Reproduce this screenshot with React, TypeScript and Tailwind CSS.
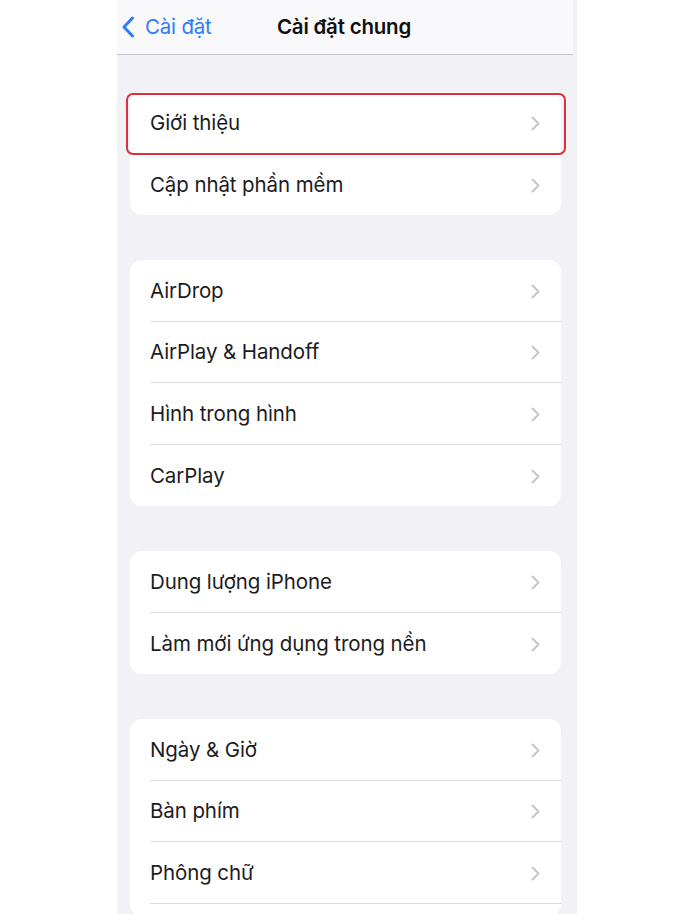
import React from 'react';

const groups: string[][] = [
  ['Giới thiệu', 'Cập nhật phần mềm'],
  ['AirDrop', 'AirPlay & Handoff', 'Hình trong hình', 'CarPlay'],
  ['Dung lượng iPhone', 'Làm mới ứng dụng trong nền'],
  ['Ngày & Giờ', 'Bàn phím', 'Phông chữ'],
];

const Chevron = () => (
  <svg width="9" height="15" viewBox="0 0 9 15" fill="none" className="shrink-0">
    <path d="M1.5 1.5l6 6-6 6" stroke="#c4c4c7" strokeWidth="1.8" strokeLinecap="round" strokeLinejoin="round" />
  </svg>
);

const Row = ({ label, last, highlight }: { label: string; last: boolean; highlight?: boolean }) => (
  <div className="relative h-[61.5px] pl-5">
    <div className={`h-full flex items-center justify-between pr-[21px] pt-[2px] ${last || highlight ? '' : 'border-b border-[#dcdce0]'}`}>
      <span className="text-[20.5px] text-[#1c1c1e] tracking-[-0.1px]">{label}</span>
      <Chevron />
    </div>
    {highlight && (
      <div className="absolute -left-[4px] -right-[5px] top-[1px] bottom-[-1px] border-2 border-[#d8323c] rounded-[7px]" />
    )}
  </div>
);

export default function App() {
  return (
    <div className="w-[700px] h-[921px] bg-white flex justify-center overflow-hidden" style={{ fontFamily: 'Inter, "Noto Sans", sans-serif' }}>
      <div className="w-[460px] ml-[-6px] h-[914px] bg-[#f1f1f6] flex flex-col overflow-hidden">
        <div className="h-[55px] shrink-0 bg-[#f9f9fb] border-b border-[#c8c8cc] mr-[4px] relative flex items-center justify-center">
          <div className="absolute left-[4px] top-0 h-full flex items-center gap-[10px] text-[#2f7cf6]">
            <svg width="14" height="22" viewBox="0 0 14 22" fill="none">
              <path d="M11.5 2L3 11l8.5 9" stroke="#2f7cf6" strokeWidth="3" strokeLinecap="round" strokeLinejoin="round" />
            </svg>
            <span className="text-[20.5px] tracking-[-0.2px]">Cài đặt</span>
          </div>
          <span className="text-[20.5px] font-semibold text-[#111] tracking-[-0.2px] ml-[-2px]">Cài đặt chung</span>
        </div>
        <div className="flex flex-col gap-[45px] pt-[37px] pl-[13px] pr-[16px] shrink-0">
          {groups.map((g, gi) => (
            <div key={gi} className="bg-white rounded-[12px] shrink-0">
              {g.map((label, i) => (
                <Row key={label} label={label} last={i === g.length - 1 && gi !== 3} highlight={gi === 0 && i === 0} />
              ))}
              {gi === 3 && <div className="h-[12px]" />}
            </div>
          ))}
        </div>
      </div>
    </div>
  );
}
